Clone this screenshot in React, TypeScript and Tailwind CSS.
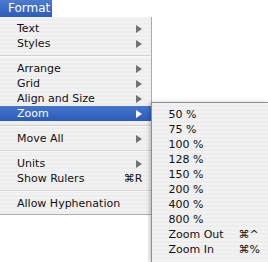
const font = "font-['DejaVu_Sans',sans-serif]";

function Arrow({ white }: { white?: boolean }) {
  return (
    <svg width="6" height="8" viewBox="0 0 6 8" className="shrink-0">
      <path d="M0 0 L6 4 L0 8 Z" fill={white ? "#ffffff" : "#727272"} />
    </svg>
  );
}

type Row = { label: string; sub?: boolean; key?: string; active?: boolean } | "sep";

const mainRows: Row[] = [
  { label: "Text", sub: true },
  { label: "Styles", sub: true },
  "sep",
  { label: "Arrange", sub: true },
  { label: "Grid", sub: true },
  { label: "Align and Size", sub: true },
  { label: "Zoom", sub: true, active: true },
  "sep",
  { label: "Move All", sub: true },
  "sep",
  { label: "Units", sub: true },
  { label: "Show Rulers", key: "⌘R" },
  "sep",
  { label: "Allow Hyphenation" },
];

const zoomRows = [
  { label: "50 %" },
  { label: "75 %" },
  { label: "100 %" },
  { label: "128 %" },
  { label: "150 %" },
  { label: "200 %" },
  { label: "400 %" },
  { label: "800 %" },
  { label: "Zoom Out", key: "⌘^" },
  { label: "Zoom In", key: "⌘%" },
];

const stripes =
  "bg-[repeating-linear-gradient(180deg,#f2f2f2_0px,#f2f2f2_2px,#ededed_2px,#ededed_4px)]";

export default function App() {
  return (
    <div className={`w-[268px] h-[262px] bg-white overflow-hidden text-[11px] text-[#111] ${font}`}>
      <div className="h-[17px] w-[52px] bg-[linear-gradient(180deg,#4c7bd0,#2c5cb9)] text-white text-[12px] leading-[17px] pl-2">
        Format
      </div>
      <div className="flex items-start">
        <div className={`w-[153px] h-[198px] border-r border-b border-[#ababab] py-1 ${stripes}`}>
          {mainRows.map((r, i) =>
            r === "sep" ? (
              <div key={i} className="h-[10px] flex flex-col justify-center">
                <div className="h-px bg-[#d2d2d2]" />
                <div className="h-px bg-[#fafafa]" />
              </div>
            ) : (
              <div
                key={i}
                className={`h-[15px] flex items-center pl-[17px] pr-[9px] ${
                  r.active ? "bg-[linear-gradient(180deg,#4475cc,#2a5bbd)] text-white" : ""
                }`}
              >
                <span className="flex-1 leading-[15px]">{r.label}</span>
                {r.sub && <Arrow white={r.active} />}
                {r.key && <span className="leading-[15px]">{r.key}</span>}
              </div>
            )
          )}
        </div>
        <div
          className={`mt-[85px] -ml-px w-[117px] h-[160px] border-l border-t border-[#8f8f8f] shadow-[-2px_0_3px_rgba(0,0,0,0.2)] pt-1 ${stripes}`}
        >
          {zoomRows.map((r, i) => (
            <div key={i} className="h-[15px] flex items-center pl-[16px]">
              <span className="w-[70px] leading-[15px]">{r.label}</span>
              {r.key && <span className="leading-[15px]">{r.key}</span>}
            </div>
          ))}
        </div>
      </div>
    </div>
  );
}
